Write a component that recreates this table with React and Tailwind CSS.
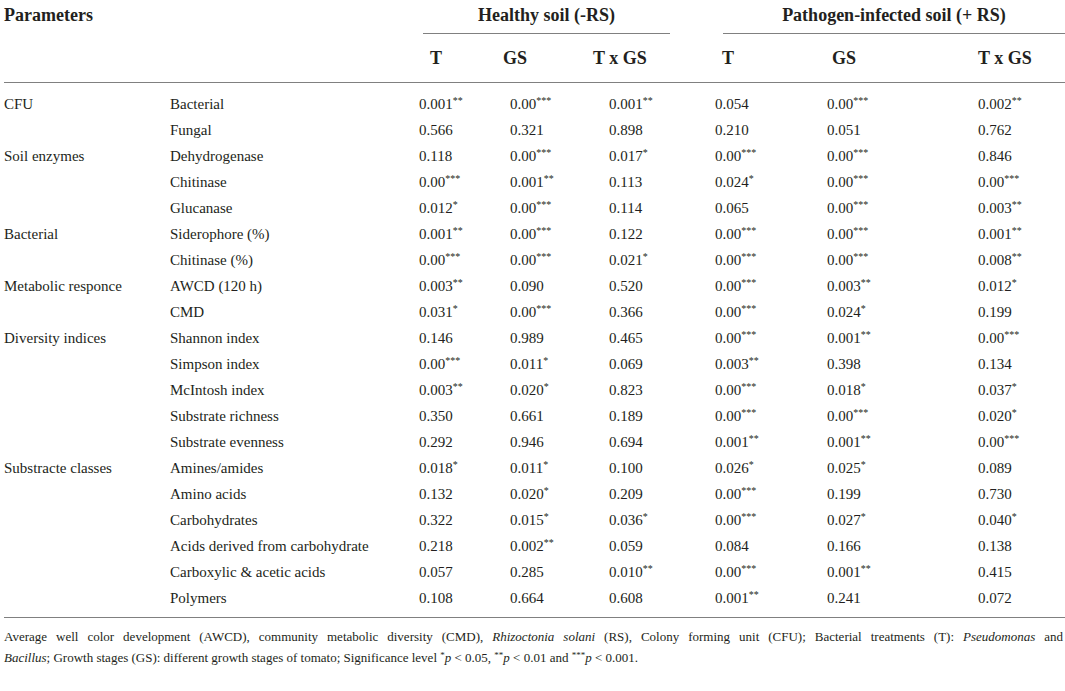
const rows = [
  ['CFU', 'Bacterial', '0.001**', '0.00***', '0.001**', '0.054', '0.00***', '0.002**'],
  ['', 'Fungal', '0.566', '0.321', '0.898', '0.210', '0.051', '0.762'],
  ['Soil enzymes', 'Dehydrogenase', '0.118', '0.00***', '0.017*', '0.00***', '0.00***', '0.846'],
  ['', 'Chitinase', '0.00***', '0.001**', '0.113', '0.024*', '0.00***', '0.00***'],
  ['', 'Glucanase', '0.012*', '0.00***', '0.114', '0.065', '0.00***', '0.003**'],
  ['Bacterial', 'Siderophore (%)', '0.001**', '0.00***', '0.122', '0.00***', '0.00***', '0.001**'],
  ['', 'Chitinase (%)', '0.00***', '0.00***', '0.021*', '0.00***', '0.00***', '0.008**'],
  ['Metabolic responce', 'AWCD (120 h)', '0.003**', '0.090', '0.520', '0.00***', '0.003**', '0.012*'],
  ['', 'CMD', '0.031*', '0.00***', '0.366', '0.00***', '0.024*', '0.199'],
  ['Diversity indices', 'Shannon index', '0.146', '0.989', '0.465', '0.00***', '0.001**', '0.00***'],
  ['', 'Simpson index', '0.00***', '0.011*', '0.069', '0.003**', '0.398', '0.134'],
  ['', 'McIntosh index', '0.003**', '0.020*', '0.823', '0.00***', '0.018*', '0.037*'],
  ['', 'Substrate richness', '0.350', '0.661', '0.189', '0.00***', '0.00***', '0.020*'],
  ['', 'Substrate evenness', '0.292', '0.946', '0.694', '0.001**', '0.001**', '0.00***'],
  ['Substracte classes', 'Amines/amides', '0.018*', '0.011*', '0.100', '0.026*', '0.025*', '0.089'],
  ['', 'Amino acids', '0.132', '0.020*', '0.209', '0.00***', '0.199', '0.730'],
  ['', 'Carbohydrates', '0.322', '0.015*', '0.036*', '0.00***', '0.027*', '0.040*'],
  ['', 'Acids derived from carbohydrate', '0.218', '0.002**', '0.059', '0.084', '0.166', '0.138'],
  ['', 'Carboxylic & acetic acids', '0.057', '0.285', '0.010**', '0.00***', '0.001**', '0.415'],
  ['', 'Polymers', '0.108', '0.664', '0.608', '0.001**', '0.241', '0.072'],
]

const cols = 'grid grid-cols-[166px_249px_91px_99px_106px_112px_151px_87px]'

function Val({ v }) {
  const m = v.match(/^([^*]*)(\**)$/)
  return (
    <span>
      {m[1]}
      {m[2] && <sup className="text-[10px]">{m[2]}</sup>}
    </span>
  )
}

export default function App() {
  return (
    <div className="bg-white w-[1065px] h-[691px] pl-[4px] text-[#231f20] font-['Liberation_Serif','DejaVu_Serif',serif]">
      <div className="flex h-[34px] text-[18px] font-bold leading-[22px]">
        <div className="w-[415px] pt-[4px]">Parameters</div>
        <div className="w-[296px]">
          <div className="ml-[4px] mr-[45px]">
            <div className="pt-[4px] text-center">Healthy soil (-RS)</div>
            <div className="mt-[7px] border-t border-[#808080]" />
          </div>
        </div>
        <div className="w-[350px]">
          <div className="ml-[8px]">
            <div className="pt-[4px] text-center">Pathogen-infected soil (+ RS)</div>
            <div className="mt-[7px] border-t border-[#808080]" />
          </div>
        </div>
      </div>

      <div className={`${cols} h-[49px] border-b border-[#808080] text-[18px] font-bold leading-[22px] pt-[13px]`}>
        <div />
        <div />
        <div className="pl-[11px]">T</div>
        <div className="-ml-[7px]">GS</div>
        <div className="-ml-[16px]">T x GS</div>
        <div className="pl-[7px]">T</div>
        <div className="pl-[5px]">GS</div>
        <div>T x GS</div>
      </div>

      <div className="pt-[8px] pb-[6px] border-b border-[#808080] text-[15px]">
        {rows.map((r, i) => (
          <div key={i} className={`${cols} h-[26px] items-center`}>
            <div>{r[0]}</div>
            <div>{r[1]}</div>
            {r.slice(2).map((v, j) => (
              <div key={j}>
                <Val v={v} />
              </div>
            ))}
          </div>
        ))}
      </div>

      <div className="pt-[8px] pr-[2px] text-[13px] leading-[21px]">
        <div className="text-justify [text-align-last:justify]">
          Average well color development (AWCD), community metabolic diversity (CMD), <i>Rhizoctonia solani</i> (RS),
          Colony forming unit (CFU); Bacterial treatments (T): <i>Pseudomonas</i> and
        </div>
        <div>
          <i>Bacillus</i>; Growth stages (GS): different growth stages of tomato; Significance level <sup className="text-[9px]">*</sup>
          <i>p</i> &lt; 0.05, <sup className="text-[9px]">**</sup>
          <i>p</i> &lt; 0.01 and <sup className="text-[9px]">***</sup>
          <i>p</i> &lt; 0.001.
        </div>
      </div>
    </div>
  )
}
